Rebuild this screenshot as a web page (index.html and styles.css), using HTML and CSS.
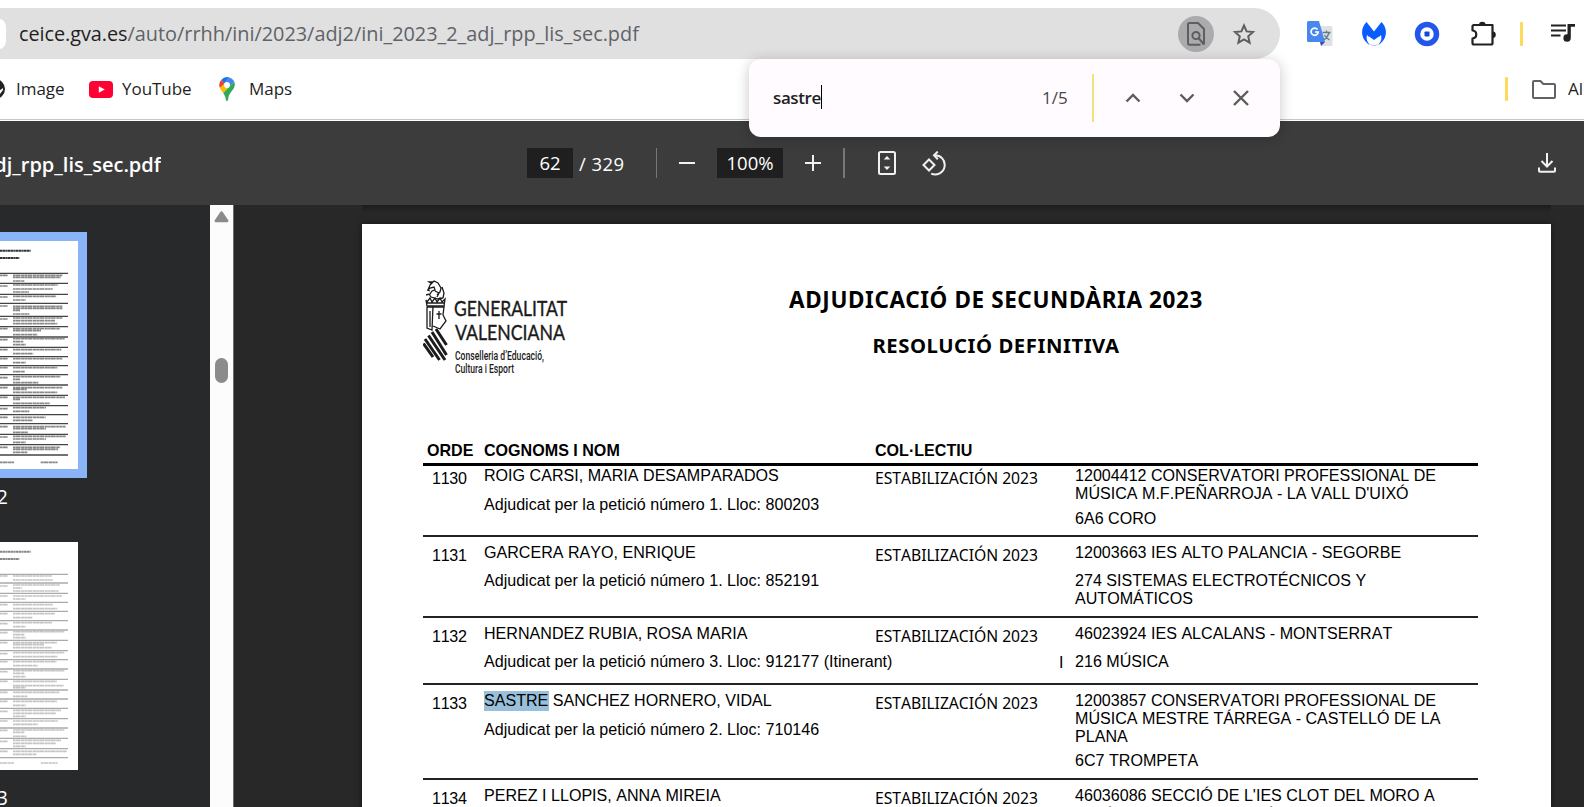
FILE: index.html
```html
<!DOCTYPE html>
<html lang="ca">
<head>
<meta charset="utf-8">
<title>ini_2023_2_adj_rpp_lis_sec.pdf</title>
<link rel="stylesheet" href="styles.css">
</head>
<body>
<div class="browser">
  <header class="address-row">
    <div class="omnibox">
      <span class="site-chip"></span>
      <span class="url"><span class="host">ceice.gva.es</span><span class="path">/auto/rrhh/ini/2023/adj2/ini_2023_2_adj_rpp_lis_sec.pdf</span></span>
      <span class="find-chip"><svg width="18" height="24" viewBox="0 0 18 24" fill="none" stroke="#5c5e61" stroke-width="2"><path d="M13.500 22.700H2.500a1.500 1.500 0 0 1-1.500-1.500V2.500A1.500 1.500 0 0 1 2.500 1h8.500l6 6v15.500"/><circle cx="9" cy="13.500" r="3.600"/><path d="M11.500 16l5.500 6.500"/></svg></span>
      <svg class="star" width="24" height="24" viewBox="0 0 24 24" fill="none" stroke="#5c5e61" stroke-width="2"><path d="M12 3.500l2.600 5.900 6.400.6-4.800 4.300 1.400 6.300L12 17.300l-5.600 3.300 1.400-6.300L3 10l6.400-.6z"/></svg>
    </div>
    <div class="extensions">
      <svg class="translate" width="26" height="26" viewBox="0 0 26 26"><path d="M10 5h14a1.500 1.500 0 0 1 1.500 1.500v17a1.500 1.500 0 0 1-1.500 1.500h-9z" fill="#dfe1e5"/><path d="M13 21h5l-4 4z" fill="#3949ab"/><path d="M1.500 0H12l6 21H1.500A1.500 1.500 0 0 1 0 19.500v-18A1.500 1.500 0 0 1 1.500 0z" fill="#4a86f0"/><path d="M10.500 8.500A3.600 3.600 0 1 0 11.200 11H8" fill="none" stroke="#fff" stroke-width="1.700"/><path d="M15.500 11.500h8M19.500 9.500v2M22 12c-1 3.500-3 5.500-5.500 7M17.500 14c1 2 3 4 5 5" fill="none" stroke="#607d8b" stroke-width="1.300"/></svg>
      <svg class="malware" width="26" height="24" viewBox="0 0 26 24"><path d="M5.500 0L13 9.500 20.500 0C26 5 27 15 20 21c-1 .9-2 1.500-3 2 3-3 4-6 3-10l-7 7-7-7c-1 4 0 7 3 10-1-.5-2-1.100-3-2C-1 15 0 5 5.500 0z" fill="#0a5cff"/><path d="M8 14.500l5 3.500 5-3.500c1 4-1 8-5 8s-6-4-5-8z" fill="#fff"/><path d="M9 22c3 1.600 5 1.600 8 0-2.500 2-5.500 2-8 0z" fill="#0a5cff"/></svg>
      <svg class="ring" width="26" height="26" viewBox="0 0 26 26"><circle cx="13" cy="13" r="9.500" fill="#fff" stroke="#2257ea" stroke-width="5.500"/><rect x="10.500" y="10.500" width="5" height="5" rx=".8" fill="#1547d6"/></svg>
      <svg class="puzzle" width="26" height="26" viewBox="0 0 26 26"><path d="M3.500 4h19v18a1.500 1.500 0 0 1-1.500 1.500H4A1.500 1.500 0 0 1 2.500 22v-4.500c5-.5 5-7.500 0-8V5.500A1.500 1.500 0 0 1 4 4z" fill="none" stroke="#202124" stroke-width="2.200" stroke-linejoin="round"/><path d="M9 4a3.300 3.300 0 0 1 6.600 0zM22.500 10.500a3.300 3.300 0 0 1 0 6.600z" fill="#202124"/></svg>
      <span class="tick"></span>
      <svg class="playlist" width="24" height="18" viewBox="0 0 24 18"><path d="M0 1.500h15M0 6.500h15M0 11.500h9.500" stroke="#202124" stroke-width="2" fill="none"/><path d="M16.500 0H24v2.800h-4.200V14a3.700 3.700 0 1 1-3.300-3.700z" fill="#202124"/></svg>
    </div>
  </header>
  <nav class="bookmarks">
    <svg class="globe" width="6" height="20" viewBox="0 0 6 20"><circle cx="-5" cy="10" r="10" fill="#202124"/><path d="M-1 12l4-3 0 2-3 4z" fill="#fff"/></svg>
    <span class="bm image">Image</span>
    <svg class="yt" width="24" height="17" viewBox="0 0 24 17"><rect width="24" height="17" rx="4" fill="#ff0033"/><path d="M9.800 5.200l6 3.300-6 3.300z" fill="#fff"/></svg>
    <span class="bm youtube">YouTube</span>
    <svg class="pin" width="16" height="24" viewBox="0 0 16 24"><path d="M2.200 3A8 8 0 0 1 10.500.4L5.400 6.300z" fill="#1a73e8"/><path d="M10.500.4a8 8 0 0 1 4.700 4L10 10.200 5.800 5.800z" fill="#4285f4"/><path d="M2 3a8 8 0 0 0-1.100 8L6.200 6.500z" fill="#ea4335"/><path d="M.9 11c.7 1.700 2 3.200 3.300 5L10.300 9 5.500 6.500z" fill="#fbbc04"/><path d="M15.200 4.400C17 9 14.600 12 12 15c-2 2.500-2.700 5-3 8.200-.3 1-1.700 1-2 0-.3-2.800-1.300-5-2.800-7.200z" fill="#34a853"/><circle cx="8" cy="8" r="3" fill="#fff"/></svg>
    <span class="bm maps">Maps</span>
    <span class="tick"></span>
    <svg class="folder" width="24" height="19" viewBox="0 0 24 19" fill="none" stroke="#5f6368" stroke-width="2" stroke-linejoin="round"><path d="M2 1h6.500l2.800 3H22a1 1 0 0 1 1 1v12a1 1 0 0 1-1 1H2a1 1 0 0 1-1-1V2a1 1 0 0 1 1-1z"/></svg>
    <span class="bm all">All Bookmarks</span>
  </nav>

  <div class="pdf-toolbar">
    <div class="file-name"><span>ini_2023_2_adj_rpp_lis_sec.pdf</span></div>
    <div class="controls">
      <span class="field page-no">62</span><span class="page-total">/ 329</span>
      <span class="bar bar-a"></span>
      <svg class="minus" width="16" height="16" viewBox="0 0 16 16"><path d="M0 8h16" stroke="#f1f1f1" stroke-width="2"/></svg>
      <span class="field zoom">100%</span>
      <svg class="plus" width="16" height="16" viewBox="0 0 16 16"><path d="M0 8h16M8 0v16" stroke="#f1f1f1" stroke-width="2"/></svg>
      <span class="bar bar-b"></span>
      <svg class="fit" width="18" height="24" viewBox="0 0 18 24"><rect x="1" y="1" width="16" height="22" rx="1.500" fill="none" stroke="#f1f1f1" stroke-width="2"/><path d="M9 5l3.300 3.500H5.700zM9 19l3.300-3.500H5.700z" fill="#f1f1f1"/></svg>
      <svg class="rotate" width="25" height="25" viewBox="0 0 25 25" fill="none" stroke="#f1f1f1" stroke-width="2"><path d="M7 8.500l5.500 5.500L7 19.500 1.500 14z"/><path d="M12 4.300a9.600 9.600 0 1 1-2.800 18.300"/><path d="M15.800.6L12 4.300l3.800 4"/></svg>
    </div>
    <svg class="download" width="18" height="20" viewBox="0 0 18 20" fill="none" stroke="#f1f1f1" stroke-width="2"><path d="M9 0v13M3.500 8L9 13.500 14.500 8M1 14.500v3.300a1 1 0 0 0 1 1h14a1 1 0 0 0 1-1v-3.300"/></svg>
  </div>

  <div class="viewer">
    <aside class="thumbs">
      <div class="thumb current">
        <svg width="78" height="228" viewBox="0 123 234 684">
          <g class="mini-title"><path d="M0 152h92M0 174h58"/></g>
          <g class="mini-rule"><path d="M0 220h204M0 250h204M0 283h204M0 310h204M0 349h204M0 380h204M0 411h204M0 442h204M0 470h204M0 497h204M0 524h204M0 555h204M0 586h204M0 617h204M0 644h204M0 671h204M0 703h204M0 734h204M0 765h204"/></g>
          <g class="mini-text"><path d="M39 226h148M39 232h143M39 243h34M39 255h134M39 267h119M39 276h48M39 289h130M39 300h38M39 319h148M39 325h149M39 331h21M39 342h49M39 354h148M39 362h126M39 371h133M39 386h141M39 392h84M39 404h73M39 416h155M39 425h31M39 434h38M39 449h145M39 461h61M39 476h148M39 488h38M39 503h133M39 515h36M39 530h142M39 538h21M39 548h76M39 563h148M39 568h41M39 577h133M39 592h156M39 598h21M39 610h110M39 623h99M39 634h49M39 652h98M39 661h60M39 680h158M39 686h99M39 697h45M39 709h158M39 717h99M39 727h38M39 742h141M39 748h135M39 757h43M0 787h42M122 787h51M0 226h24M0 258h24M0 291h24M0 318h24M0 357h24M0 386h24M0 419h24M0 449h24M0 476h24M0 503h24M0 533h24M0 563h24M0 592h24M0 626h24M0 652h24M0 680h24M0 711h24M0 742h24"/></g>
        </svg>
      </div>
      <div class="thumb-no">62</div>
      <div class="thumb next">
        <svg width="78" height="228" viewBox="0 186 234 684">
          <g class="mini-title"><path d="M0 215h92M0 237h58"/></g>
          <g class="mini-rule"><path d="M0 283h204M0 309h204M0 340h204M0 367h204M0 394h204M0 422h204M0 450h204M0 481h204M0 512h204M0 539h204M0 567h204M0 598h204M0 630h204M0 657h204M0 685h204M0 716h204M0 744h204M0 775h204M0 806h204M0 833h204"/></g>
          <g class="mini-text"><path d="M39 288h117M39 300h119M39 315h141M39 324h27M39 333h137M39 348h147M39 357h38M39 374h119M39 386h133M39 401h125M39 413h59M39 428h117M39 440h38M39 455h154M39 464h34M39 473h38M39 488h132M39 494h93M39 503h116M39 518h154M39 530h133M39 545h131M39 557h74M39 572h154M39 580h34M39 590h38M39 604h132M39 617h152M39 623h38M39 637h139M39 649h44M39 664h132M39 676h38M39 691h144M39 700h128M39 709h38M39 723h135M39 733h74M39 750h154M39 757h34M39 769h40M39 781h144M39 790h128M39 799h38M39 814h161M39 823h71M0 849h42M122 849h51M0 288h24M0 318h24M0 348h24M0 374h24M0 401h24M0 431h24M0 458h24M0 488h24M0 521h24M0 545h24M0 575h24M0 604h24M0 637h24M0 664h24M0 694h24M0 723h24M0 751h24M0 784h24M0 814h24"/></g>
        </svg>
      </div>
      <div class="thumb-no">63</div>
    </aside>
    <div class="scrollbar">
      <svg width="15" height="12" viewBox="0 0 15 12"><path d="M6.300 1a1.500 1.500 0 0 1 2.400 0l5.600 8.200a1.300 1.300 0 0 1-1.100 2H1.800a1.300 1.300 0 0 1-1.100-2z" fill="#8b8b8b"/></svg>
      <span class="grip"></span>
    </div>
    <main class="canvas">
      <article class="sheet">
        <div class="masthead">
          <svg class="logo" width="146" height="98" viewBox="0 0 146 98">
            <g fill="none" stroke="#1b1b1b" stroke-width="1.300">
              <path d="M3 16l4-1 2-3 3-1-1-3-4 1-2 2 2-5 4-4 4 2 3 5-1 4-3 3M19 8l2 6-1 5M6 15l2 3 7 2 5-1M9 5l-3-2 4 0M12 12l4 2-2 4M4 11l3 1"/>
              <path d="M3 21l1 6h17l1-7-3 3-2-4-3 4-2-4-3 4-2-4-3 4zM4 24h17"/>
              <path d="M4 28v21l5 2 1-24M4 28h17l-1 8 3 6-6 8-7-3M16 32v8M13.500 35h5M7 32v16"/>
            </g>
            <path d="M13 50L23.500 66M9 53l14.500 23M5.500 56.500L22 81M2 60l14.500 21M.5 64.500L10 78" fill="none" stroke="#1b1b1b" stroke-width="3"/>
            <g fill="#1b1b1b">
              <text x="31" y="37" class="logo-main" textLength="113" lengthAdjust="spacingAndGlyphs">GENERALITAT</text>
              <text x="32" y="61" class="logo-main" textLength="110" lengthAdjust="spacingAndGlyphs">VALENCIANA</text>
              <text x="32" y="80.500" class="logo-sub" textLength="89" lengthAdjust="spacingAndGlyphs">Conselleria d’Educació,</text>
              <text x="32" y="94" class="logo-sub" textLength="59" lengthAdjust="spacingAndGlyphs">Cultura i Esport</text>
            </g>
          </svg>
          <div class="titles">
            <h1>ADJUDICACIÓ DE SECUNDÀRIA 2023</h1>
            <h2>RESOLUCIÓ DEFINITIVA</h2>
          </div>
        </div>
        <div class="row head"><span>ORDE</span><span>COGNOMS I NOM</span><span>COL·LECTIU</span></div>
        <div class="row r1130">
          <span class="num">1130</span>
          <div class="who"><p>ROIG CARSI, MARIA DESAMPARADOS</p><p class="gap-11">Adjudicat per la petició número 1. Lloc: 800203</p></div>
          <span class="col">ESTABILIZACIÓN 2023</span>
          <div class="place"><p>12004412 CONSERVATORI PROFESSIONAL DE<br>MÚSICA M.F.PEÑARROJA - LA VALL D'UIXÓ</p><p class="gap-7">6A6 CORO</p></div>
        </div>
        <div class="row r1131">
          <span class="num">1131</span>
          <div class="who"><p>GARCERA RAYO, ENRIQUE</p><p class="gap-10">Adjudicat per la petició número 1. Lloc: 852191</p></div>
          <span class="col">ESTABILIZACIÓN 2023</span>
          <div class="place"><p>12003663 IES ALTO PALANCIA - SEGORBE</p><p class="gap-10">274 SISTEMAS ELECTROTÉCNICOS Y<br>AUTOMÁTICOS</p></div>
        </div>
        <div class="row r1132">
          <span class="num">1132</span>
          <div class="who"><p>HERNANDEZ RUBIA, ROSA MARIA</p><p class="gap-10">Adjudicat per la petició número 3. Lloc: 912177 (Itinerant)</p></div>
          <span class="col">ESTABILIZACIÓN 2023</span>
          <div class="place"><p>46023924 IES ALCALANS - MONTSERRAT</p><p class="gap-10"><span class="flag">I</span>216 MÚSICA</p></div>
        </div>
        <div class="row r1133">
          <span class="num">1133</span>
          <div class="who"><p><mark>SASTRE</mark> SANCHEZ HORNERO, VIDAL</p><p class="gap-11">Adjudicat per la petició número 2. Lloc: 710146</p></div>
          <span class="col">ESTABILIZACIÓN 2023</span>
          <div class="place"><p>12003857 CONSERVATORI PROFESSIONAL DE<br>MÚSICA MESTRE TÁRREGA - CASTELLÓ DE LA<br>PLANA</p><p class="gap-6">6C7 TROMPETA</p></div>
        </div>
        <div class="row r1134">
          <span class="num">1134</span>
          <div class="who"><p>PEREZ I LLOPIS, ANNA MIREIA</p></div>
          <span class="col">ESTABILIZACIÓN 2023</span>
          <div class="place"><p>46036086 SECCIÓ DE L'IES CLOT DEL MORO A</p><p class="accents"><span>´</span><span>´</span></p></div>
        </div>
      </article>
    </main>
  </div>

  <div class="find-bar">
    <span class="query">sastre</span><span class="caret"></span>
    <span class="count">1/5</span>
    <span class="rule"></span>
    <svg width="16" height="16" viewBox="0 0 16 16"><path d="M1.500 11.500L8 5l6.500 6.500"/></svg>
    <svg width="16" height="16" viewBox="0 0 16 16"><path d="M1.500 4.500L8 11l6.500-6.500"/></svg>
    <svg width="16" height="16" viewBox="0 0 16 16"><path d="M1 1l14 14M15 1L1 15"/></svg>
  </div>
</div>
</body>
</html>
```
FILE: styles.css
```css
* { box-sizing: border-box; }
body { margin: 0; background: #fff; font-family: "Open Sans", "Noto Sans", sans-serif; }
p, h1, h2 { margin: 0; }
svg { display: block; flex: none; }
.browser { position: relative; width: 1584px; height: 807px; overflow: hidden; display: flex; flex-direction: column; }

.address-row { display: flex; height: 59px; padding-top: 8px; }
.omnibox { width: 1280px; height: 51px; border-radius: 0 26px 26px 0; background: #e0e0e0; display: flex; align-items: center; }
.site-chip { width: 6px; height: 30px; border-radius: 0 10px 10px 0 / 0 15px 15px 0; background: #fff; }
.url { margin-left: 13px; font-size: 19.860px; line-height: 28px; white-space: nowrap; flex: 1; }
.host { color: #1f1f1f; letter-spacing: -.05px; }
.path { color: #5f6368; }
.find-chip { width: 36px; height: 36px; border-radius: 50%; background: #ababad; display: flex; align-items: center; justify-content: center; }
.star { margin: 0 24px 0 18px; }
.extensions { display: flex; align-items: center; height: 51px; padding-left: 27px; }
.malware { margin-left: 28px; }
.ring { margin-left: 27px; }
.puzzle { margin-left: 30px; }
.tick { flex: none; width: 3px; height: 24px; border-radius: 1px; background: #fdd95c; }
.extensions .tick { margin-left: 24px; }
.playlist { margin-left: 28px; margin-top: -2px; }

.bookmarks { height: 62px; border-bottom: 1px solid #fff; box-shadow: inset 0 -1px #c8c8c8; display: flex; align-items: center; padding-bottom: 1px; color: #1f1f1f; font-size: 17px; letter-spacing: -.05px; line-height: 24px; white-space: nowrap; }
.bm { flex: none; }
.image { margin-left: 10px; width: 49px; }
.yt { margin-left: 24px; }
.youtube { margin-left: 9px; width: 69px; }
.pin { margin-left: 28px; }
.maps { margin-left: 14px; width: 42px; }
.bookmarks .tick { margin-left: 1214px; }
.folder { margin-left: 24px; }
.all { margin-left: 12px; }

.pdf-toolbar { height: 84px; background: #3c3c3c; display: flex; align-items: center; color: #fff; }
.file-name { width: 161px; margin-right: 366px; padding-top: 2px; overflow: hidden; display: flex; justify-content: flex-end; font-size: 20px; font-weight: 600; white-space: nowrap; }
.controls { display: flex; align-items: center; width: 1011px; font-size: 18.500px; }
.field { height: 30px; line-height: 30px; background: #1f1f1f; text-align: center; }
.page-no { width: 46px; }
.page-total { margin-left: 6px; padding-top: 1px; width: 46px; font-size: 18.500px; letter-spacing: .45px; white-space: nowrap; }
.bar { height: 30px; background: #777; }
.bar-a { width: 1px; margin-left: 31px; }
.minus { margin-left: 22px; }
.zoom { width: 66px; margin-left: 22px; }
.plus { margin-left: 22px; }
.bar-b { width: 2px; margin-left: 22px; }
.fit { margin-left: 33px; }
.rotate { margin-left: 26px; }

.viewer { flex: 1; display: flex; min-height: 0; background: #282828; }
.thumbs { width: 210px; background: #28292a; padding-top: 27px; }
.thumb svg { background: #fff; }
.current { width: 87px; padding: 9px 9px 9px 0; background: #8ab4f8; }
.next { margin-bottom: 9px; }
.thumb-no { width: 8px; height: 64px; padding-top: 5px; display: flex; justify-content: flex-end; font-size: 19.500px; line-height: 28px; color: #fff; }
.mini-title path { stroke: #333; stroke-width: 6; stroke-dasharray: 7 1; }
.mini-rule path { stroke: #444; stroke-width: 4; }
.mini-text path { stroke: #888; stroke-width: 5; stroke-dasharray: 8 .8 14 1.500 10 .8; }
.next .mini-title path { stroke: #888; }
.next .mini-rule path { stroke: #aaa; stroke-width: 4; }
.next .mini-text path { stroke: #c4c4c4; }
.scrollbar { width: 24px; background: #fcfcfc; border-right: 1px solid #6b6b6b; display: flex; flex-direction: column; align-items: center; padding-top: 6px; }
.grip { width: 13px; height: 25px; margin-top: 135px; border-radius: 7px; background: #8b8b8b; }

.canvas { flex: 1; padding: 19px 0 0 128px; overflow: hidden; background: linear-gradient(#1c1c1c, #282828 8px) 128px 0 / 1189px 10px no-repeat; }
.sheet { width: 1189px; height: 1680px; background: #fff; box-shadow: 0 0 6px rgba(0,0,0,.5); padding: 55px 73px 0 61px; color: #000; font-family: "Liberation Sans", Arial, sans-serif; font-size: 16.080px; font-kerning: none; line-height: 18px; }
.masthead { display: flex; height: 162px; }
.logo-main { font: 400 22px Lato, sans-serif; stroke: #1b1b1b; stroke-width: .4px; }
.logo-sub { font: 500 12px Roboto, sans-serif; }
.titles { width: 854px; font-family: "Noto Sans", sans-serif; color: #000; text-align: center; font-kerning: auto; }
h1 { padding-top: 5px; font-size: 22.500px; letter-spacing: .6px; line-height: 32px; }
h2 { padding-top: 14px; font-size: 20.300px; letter-spacing: .55px; line-height: 30px; }
.row { display: grid; grid-template-columns: 61px 391px 200px 1fr; border-bottom: 2px solid #222; white-space: nowrap; }
.head { height: 25px; border-bottom: 3px solid #000; font-weight: 700; }
.head span:first-child { padding-left: 4px; }
.num { padding-left: 9px; margin-top: 3px; letter-spacing: -.3px; }
.col { margin-top: 3px; font-family: "Noto Sans", sans-serif; font-size: 15.700px; letter-spacing: -.03px; }
.r1130 { height: 71px; }
.r1131 { height: 81px; padding-top: 6px; }
.r1132 { height: 67px; padding-top: 6px; }
.r1133 { height: 95px; padding-top: 6px; }
.r1134 { height: 80px; padding-top: 6px; }
.gap-6 { margin-top: 6px; }
.gap-7 { margin-top: 7px; }
.gap-10 { margin-top: 10px; }
.gap-11 { margin-top: 11px; }
.flag { position: absolute; margin: 1px 0 0 -16px; }
mark { background: #98c0da; color: inherit; padding: 0 1px 2px 0; margin-right: -1px; }
.accents { display: flex; padding-left: 32px; gap: 156px; }

.find-bar { position: absolute; z-index: 2; left: 749px; top: 59px; width: 531px; height: 78px; border-radius: 12px; background: #fffbff; box-shadow: 0 2px 14px rgba(0,0,0,.22); display: flex; align-items: center; padding-left: 24px; font-size: 17px; color: #1f1f1f; }
.find-bar path { fill: none; stroke: #5b5d58; stroke-width: 2.400; }
.query { font-weight: 600; width: 48px; margin-top: -2px; letter-spacing: -.4px; }
.caret { width: 1px; height: 24px; background: #000; margin-top: -3px; }
.count { width: 26px; margin: -2px 0 0 220px; color: #474747; }
.rule { width: 2px; height: 48px; background: #f2e27c; margin: 0 31px 0 24px; }
.find-bar svg + svg { margin-left: 38px; }
```
